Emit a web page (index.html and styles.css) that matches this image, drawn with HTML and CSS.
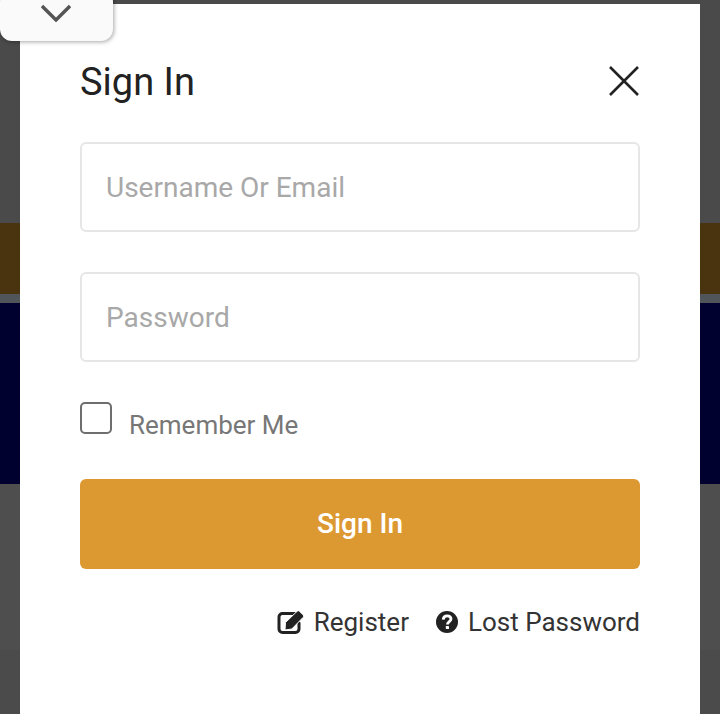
FILE: index.html
```html
<!DOCTYPE html>
<html lang="en">
<head>
    <meta charset="UTF-8">
    <meta name="viewport" content="width=device-width, initial-scale=1.0">
    <title>Sign In</title>
    <link rel="stylesheet" href="styles.css">
</head>
<body>
    <div class="backdrop">
        <div class="band band-top"></div>
        <div class="band band-brown"></div>
        <div class="band band-line"></div>
        <div class="band band-navy"></div>
        <div class="band band-lower"></div>
        <div class="band band-bottom"></div>
    </div>

    <section class="modal">
        <header class="modal-head">
            <h2>Sign In</h2>
            <button class="close" type="button" aria-label="Close">
                <svg width="30" height="30" viewBox="0 0 30 30"><path d="M1 1 L29 29 M29 1 L1 29" fill="none" stroke="#222" stroke-width="2.6"/></svg>
            </button>
        </header>

        <form class="login-form">
            <input class="field" type="text" placeholder="Username Or Email">
            <input class="field" type="password" placeholder="Password">

            <label class="remember">
                <span class="checkbox"></span>
                <span class="remember-text">Remember Me</span>
            </label>

            <button class="submit" type="button">Sign In</button>
        </form>

        <div class="links">
            <a href="#">
                <svg width="27" height="24" viewBox="0 0 27 24"><path d="M18 3.5 H5.5 a3.5 3.5 0 0 0-3.5 3.5 v12 a3.5 3.5 0 0 0 3.5 3.5 h13 a3.5 3.5 0 0 0 3.5-3.5 v-6" fill="none" stroke="#222" stroke-width="3" stroke-linecap="round"/><path d="M8.5 12.5 L20.2 1.2 a1.6 1.6 0 0 1 2.2 0 l3.9 3.8 a1.6 1.6 0 0 1 0 2.2 L14.8 19 L8 20 Z" fill="#222" stroke="#fff" stroke-width="1"/></svg>
                Register
            </a>
            <a href="#">
                <svg width="22" height="22" viewBox="0 0 22 22"><circle cx="11" cy="11" r="11" fill="#222"/><path d="M7.2 8.6 C7.4 6 9.2 4.8 11.1 4.8 C13.4 4.8 15 6.2 15 8.1 C15 10.6 11.4 10.6 11.4 13.4" fill="none" stroke="#fff" stroke-width="2.8"/><rect x="9.8" y="15" width="3.2" height="3" rx="0.6" fill="#fff"/></svg>
                Lost Password
            </a>
        </div>
    </section>

    <button class="collapse" type="button" aria-label="Collapse">
        <svg width="30" height="18" viewBox="0 0 30 18"><path d="M1 2 L15 16 L29 2" fill="none" stroke="#555" stroke-width="3.4"/></svg>
    </button>
</body>
</html>
```

FILE: styles.css
```css
* {
    box-sizing: border-box;
}

html,
body {
    height: 100%;
}

body {
    margin: 0;
    overflow: hidden;
    font-family: Roboto, Arial, sans-serif;
    background-color: #4b4b4b;
}

.backdrop {
    display: flex;
    flex-direction: column;
    height: 100%;
}

.band-top {
    height: 223px;
    background-color: #4a4a4a;
}

.band-brown {
    height: 71px;
    background-color: #4a340f;
}

.band-line {
    height: 9px;
    background-color: #50555a;
}

.band-navy {
    height: 181px;
    background-color: #010130;
}

.band-lower {
    height: 166px;
    background-color: #4e4e4e;
}

.band-bottom {
    flex: 1;
    background-color: #4b4b4b;
}

.modal {
    position: absolute;
    top: 4px;
    left: 20px;
    right: 20px;
    bottom: 0;
    padding: 0 60px;
    background-color: #fff;
}

.modal-head {
    display: flex;
    justify-content: space-between;
    align-items: center;
    height: 138px;
    padding-top: 16px;
}

.modal-head h2 {
    margin: 2px 0 0;
    font-size: 38px;
    font-weight: 400;
    color: #222;
}

.close {
    display: flex;
    margin-right: 1px;
    padding: 0;
    border: none;
    background: none;
}

.login-form {
    display: flex;
    flex-direction: column;
}

.field {
    height: 90px;
    margin-bottom: 40px;
    padding: 0 24px;
    border: 2px solid #e6e6e6;
    border-radius: 6px;
    font-family: Roboto, Arial, sans-serif;
    font-size: 28px;
    color: #222;
}

.field::placeholder {
    color: #a8a8a8;
    opacity: 1;
}

.remember {
    display: flex;
    height: 77px;
}

.checkbox {
    width: 32px;
    height: 32px;
    border: 2px solid #6e6e6e;
    border-radius: 5px;
}

.remember-text {
    margin-left: 17px;
    padding-top: 8px;
    font-size: 26px;
    color: #777;
}

.submit {
    height: 90px;
    padding-bottom: 3px;
    border: none;
    border-radius: 6px;
    background-color: #dd9931;
    color: #fff;
    font-family: Roboto, Arial, sans-serif;
    font-size: 28px;
    font-weight: 500;
}

.links {
    display: flex;
    justify-content: flex-end;
    gap: 27px;
    margin-top: 38px;
}

.links a {
    display: flex;
    align-items: center;
    gap: 10px;
    font-size: 26px;
    color: #333;
    text-decoration: none;
}

.collapse {
    position: absolute;
    top: -10px;
    left: 0;
    display: flex;
    justify-content: center;
    align-items: flex-start;
    width: 113px;
    height: 51px;
    padding: 14px 2px 0 0;
    border: none;
    border-radius: 12px;
    background-color: #fafafa;
    box-shadow: 1px 1px 4px rgba(0, 0, 0, 0.35);
}
```
